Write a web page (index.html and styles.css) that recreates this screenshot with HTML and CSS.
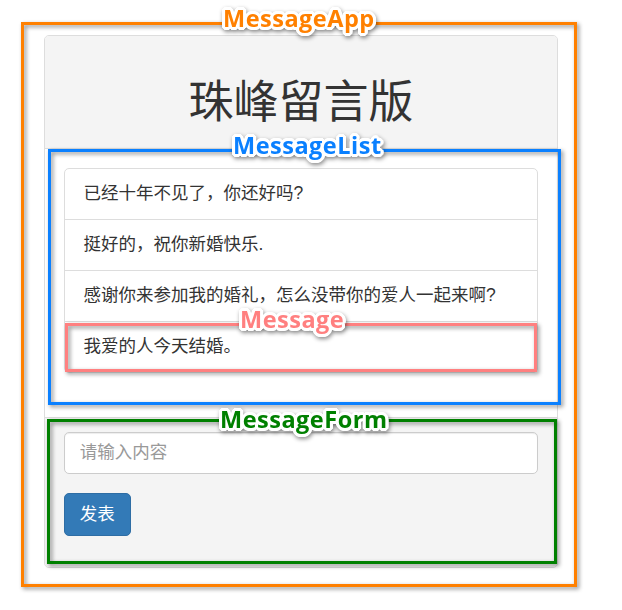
FILE: index.html
```html
<!DOCTYPE html>
<html lang="zh-CN">
<head>
<meta charset="utf-8">
<title>珠峰留言版</title>
<link rel="stylesheet" href="styles.css">
</head>
<body>
<div class="stage">
  <div class="panel">
    <div class="panel-heading">
      <h1 class="title">珠峰留言版</h1>
    </div>
    <div class="panel-body">
      <ul class="list-group">
        <li class="list-item">已经十年不见了，你还好吗?</li>
        <li class="list-item">挺好的，祝你新婚快乐.</li>
        <li class="list-item">感谢你来参加我的婚礼，怎么没带你的爱人一起来啊?</li>
        <li class="list-item">我爱的人今天结婚。</li>
      </ul>
    </div>
    <div class="panel-footer">
      <div class="form-group">
        <input class="input" type="text" placeholder="请输入内容">
      </div>
      <div class="form-group">
        <button class="btn" type="button">发表</button>
      </div>
    </div>
  </div>

  <div class="box box-app"></div>
  <div class="box box-list"></div>
  <div class="box box-msg"></div>
  <div class="box box-form"></div>

  <span class="tag tag-app">MessageApp</span>
  <span class="tag tag-list">MessageList</span>
  <span class="tag tag-msg">Message</span>
  <span class="tag tag-form">MessageForm</span>
</div>
</body>
</html>
```

FILE: styles.css
```css
html, body {
  margin: 0;
  background: #fff;
}

body {
  font-family: "Liberation Sans", "Noto Sans CJK SC", sans-serif;
  font-size: 17.5px;
  line-height: 25px;
  color: #333;
}

.stage {
  position: relative;
  width: 622px;
  height: 610px;
  padding: 35px 0 0 44px;
  box-sizing: border-box;
}

/* panel */
.panel {
  width: 514px;
  box-sizing: border-box;
  border: 1px solid #ddd;
  border-radius: 5px;
  background: #fff;
}

.panel-heading {
  background: #f4f4f4;
  border-bottom: 1px solid #ddd;
  border-radius: 4px 4px 0 0;
  padding: 12.5px 18.75px;
}

.title {
  margin: 25px 0 12.5px;
  font-family: "Noto Sans CJK SC", sans-serif;
  font-size: 45px;
  line-height: 49.5px;
  font-weight: 400;
  text-align: center;
  color: #333;
}

.panel-body {
  padding: 18.75px;
}

.list-group {
  list-style: none;
  margin: 0 0 25px;
  padding: 0;
}

.list-item {
  padding: 12.5px 18.75px;
  border: 1px solid #ddd;
  margin-bottom: -1px;
  background: #fff;
}

.list-item:first-child {
  border-radius: 5px 5px 0 0;
}

.list-item:last-child {
  border-radius: 0 0 5px 5px;
  margin-bottom: 0;
}

.panel-footer {
  background: #f4f4f4;
  border-top: 1px solid #ddd;
  border-radius: 0 0 4px 4px;
  padding: 14px 18.75px 12.5px;
}

.form-group {
  margin-bottom: 19px;
}

.input {
  display: block;
  width: 100%;
  height: 42px;
  box-sizing: border-box;
  padding: 7.5px 15px;
  font: inherit;
  color: #555;
  background: #fff;
  border: 1px solid #ccc;
  border-radius: 5px;
  box-shadow: inset 0 1px 1px rgba(0, 0, 0, 0.075);
  outline: none;
}

.input::placeholder {
  color: #999;
}

.btn {
  display: inline-block;
  height: 43px;
  box-sizing: border-box;
  padding: 8px 15px;
  font: inherit;
  line-height: 25px;
  color: #fff;
  background: #337ab7;
  border: 1px solid #2e6da4;
  border-radius: 5px;
}

/* annotation overlay */
.box {
  position: absolute;
  box-sizing: border-box;
  border: 3px solid;
  filter: drop-shadow(2px 2px 2px rgba(0, 0, 0, 0.45));
}

.box-app {
  left: 21px;
  top: 22px;
  width: 556px;
  height: 565px;
  border-color: #ff8000;
}

.box-list {
  left: 48px;
  top: 149px;
  width: 513px;
  height: 256px;
  border-color: #0a80ff;
}

.box-msg {
  left: 65px;
  top: 323px;
  width: 472px;
  height: 49px;
  border-color: #ff8080;
}

.box-form {
  left: 47px;
  top: 419px;
  width: 510px;
  height: 145px;
  border-color: #008000;
}

.tag {
  position: absolute;
  font-family: "Open Sans", sans-serif;
  font-weight: 700;
  font-size: 23.5px;
  line-height: 17px;
  letter-spacing: 0.5px;
  white-space: nowrap;
  text-shadow:
    3px 0 0 #fff, -3px 0 0 #fff, 0 3px 0 #fff, 0 -3px 0 #fff,
    2px 2px 0 #fff, -2px 2px 0 #fff, 2px -2px 0 #fff, -2px -2px 0 #fff,
    3px 1px 0 #fff, -3px 1px 0 #fff, 3px -1px 0 #fff, -3px -1px 0 #fff,
    1px 3px 0 #fff, -1px 3px 0 #fff, 1px -3px 0 #fff, -1px -3px 0 #fff;
  filter: drop-shadow(1px 2px 2px rgba(0, 0, 0, 0.45));
}

.tag-app {
  left: 223px;
  top: 9.5px;
  color: #ff8000;
}

.tag-list {
  left: 233px;
  top: 136.5px;
  color: #0a80ff;
}

.tag-msg {
  left: 240px;
  top: 310.5px;
  color: #ff8080;
}

.tag-form {
  left: 220px;
  top: 410.5px;
  color: #008000;
}
```
